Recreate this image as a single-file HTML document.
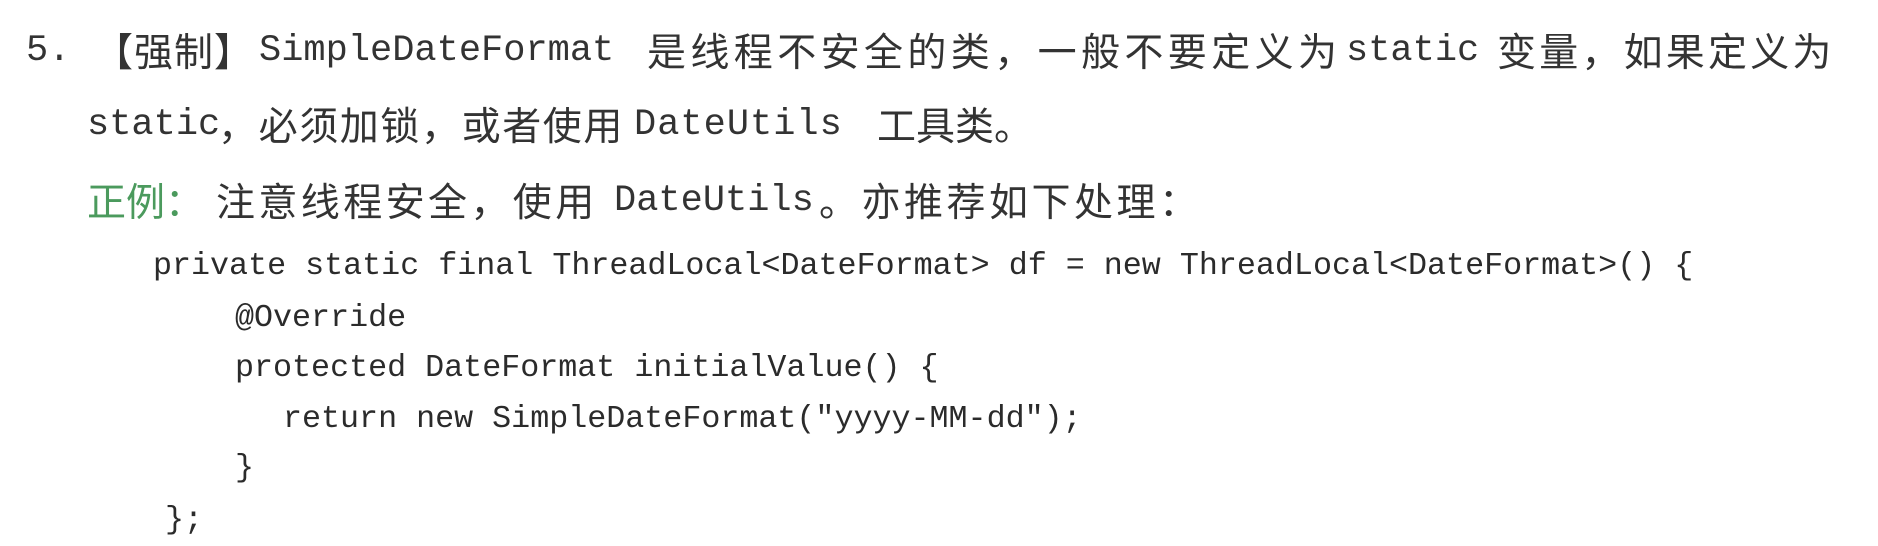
<!DOCTYPE html>
<html><head><meta charset="utf-8"><style>
html,body{margin:0;padding:0;background:#fff;width:1878px;height:546px;overflow:hidden}
.s{position:absolute;white-space:pre;color:#333;line-height:50px;height:50px}
.c{font-family:"Noto Sans CJK SC","WenQuanYi Zen Hei",sans-serif;font-size:39px}
.m{font-family:"Liberation Mono",monospace;font-size:37px}
.k{font-family:"Liberation Mono",monospace;font-size:31.7px;color:#2b2b2b}
.g{color:#4b9a5d}
</style></head><body>
<!-- line 1 -->
<div class="s m" style="left:26px;top:26px">5.</div>
<div class="s c" style="left:94px;top:25px;letter-spacing:1px">【强制】</div>
<div class="s m" style="left:259px;top:26px">SimpleDateFormat</div>
<div class="s c" style="left:647px;top:25px;letter-spacing:4.4px">是线程不安全的类，一般不要定义为</div>
<div class="s m" style="left:1346px;top:26px">static</div>
<div class="s c" style="left:1497px;top:25px;letter-spacing:3.2px">变量，如果定义为</div>
<!-- line 2 -->
<div class="s m" style="left:87px;top:100px">static</div>
<div class="s c" style="left:218px;top:99px;letter-spacing:1.6px">，必须加锁，或者使用</div>
<div class="s m" style="left:634px;top:100px;letter-spacing:1px">DateUtils</div>
<div class="s c" style="left:877px;top:99px;letter-spacing:0px">工具类。</div>
<!-- line 3 -->
<div class="s c g" style="left:87px;top:175px">正例：</div>
<div class="s c" style="left:216px;top:175px;letter-spacing:3.4px">注意线程安全，使用</div>
<div class="s m" style="left:614px;top:176px">DateUtils</div>
<div class="s c" style="left:819px;top:175px;letter-spacing:3.5px">。亦推荐如下处理：</div>
<!-- code -->
<div class="s k" style="left:153px;top:241px">private static final ThreadLocal&lt;DateFormat&gt; df = new ThreadLocal&lt;DateFormat&gt;() {</div>
<div class="s k" style="left:235px;top:293px">@Override</div>
<div class="s k" style="left:235px;top:343px">protected DateFormat initialValue() {</div>
<div class="s k" style="left:283px;top:394px">return new SimpleDateFormat("yyyy-MM-dd");</div>
<div class="s k" style="left:235px;top:443px">}</div>
<div class="s k" style="left:165px;top:495px">};</div>
</body></html>
